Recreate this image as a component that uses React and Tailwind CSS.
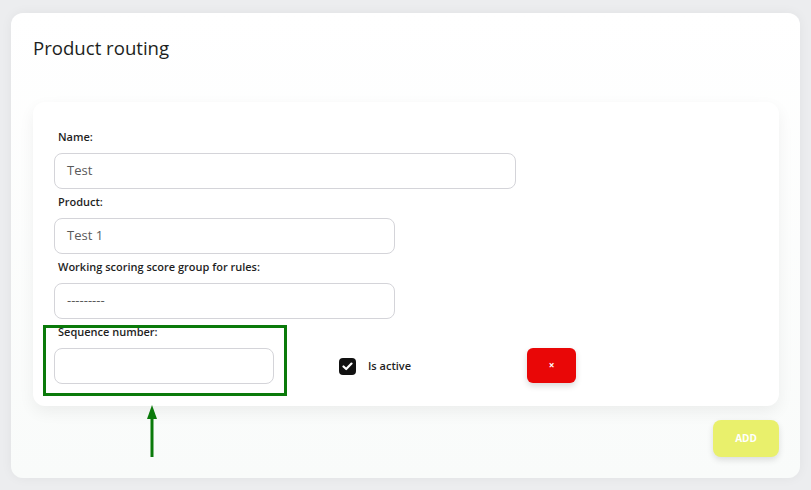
import React from "react";

function Field({ label, value, width }) {
  return (
    <div className="flex flex-col">
      <div className="pl-[4px] text-[11px] font-semibold leading-[16px] text-[#1f1f1f] mb-[8px]">{label}</div>
      <div
        className="h-[36px] rounded-[8px] border border-[#d4d4d9] bg-white flex items-center pl-[12px] text-[13px] text-[#5a5a5a]"
        style={{ width }}
      >
        {value}
      </div>
    </div>
  );
}

export default function App() {
  return (
    <div className="w-[811px] h-[490px] bg-[#ecedef] pt-[13px] pl-[11px] relative overflow-hidden" style={{ fontFamily: '"Open Sans", "Noto Sans", sans-serif' }}>
      <div className="w-[789px] h-[465px] rounded-[12px] bg-gradient-to-b from-white to-[#f9fbfa] shadow-[0_0_12px_rgba(0,0,0,0.05)] pt-[21px] px-[22px] flex flex-col">
        <div className="text-[18.6px] leading-[27px] text-[#1d1f21]">Product routing</div>
        <div className="mt-[41px] w-[746px] h-[304px] rounded-[12px] bg-white shadow-[0_6px_16px_rgba(0,0,0,0.06)] pt-[27px] pl-[21px] flex flex-col">
          <Field label="Name:" value="Test" width={462} />
          <div className="mt-[5px]"><Field label="Product:" value="Test 1" width={341} /></div>
          <div className="mt-[5px]"><Field label="Working scoring score group for rules:" value="---------" width={341} /></div>
          <div className="mt-[5px] flex items-end">
            <Field label="Sequence number:" value="" width={220} />
            <div className="ml-[65px] h-[36px] flex items-center">
              <div className="w-[17px] h-[17px] rounded-[4px] bg-[#111] flex items-center justify-center">
                <svg width="11" height="9" viewBox="0 0 11 9"><path d="M1.5 4.5 L4.2 7 L9.5 1.6" stroke="white" strokeWidth="2.2" fill="none" strokeLinecap="round" strokeLinejoin="round" /></svg>
              </div>
              <span className="ml-[12px] text-[11px] font-semibold text-[#1f1f1f]">Is active</span>
            </div>
            <div className="ml-[116px] mb-[1px] w-[49px] h-[35px] rounded-[6px] bg-[#e90707] shadow-[0_3px_6px_rgba(0,0,0,0.15)] flex items-center justify-center text-white text-[10px] font-bold">×</div>
          </div>
        </div>
        <div className="flex justify-end mt-[14px] pr-[0px]">
          <div className="w-[66px] h-[37px] mr-[-1px] rounded-[8px] bg-[#e9f06c] shadow-[0_3px_6px_rgba(0,0,0,0.12)] flex items-center justify-center text-white text-[10px] font-bold">ADD</div>
        </div>
      </div>
      <div className="absolute left-[43px] top-[325px] w-[244px] h-[71px] border-[3px] border-[#0a7a0a]"></div>
      <svg className="absolute left-[144px] top-[403px]" width="16" height="56" viewBox="0 0 16 56">
        <path d="M8 2 L3 16 L13 16 Z" fill="#0a7a0a" />
        <line x1="8" y1="14" x2="8" y2="54" stroke="#0a7a0a" strokeWidth="3" />
      </svg>
    </div>
  );
}
